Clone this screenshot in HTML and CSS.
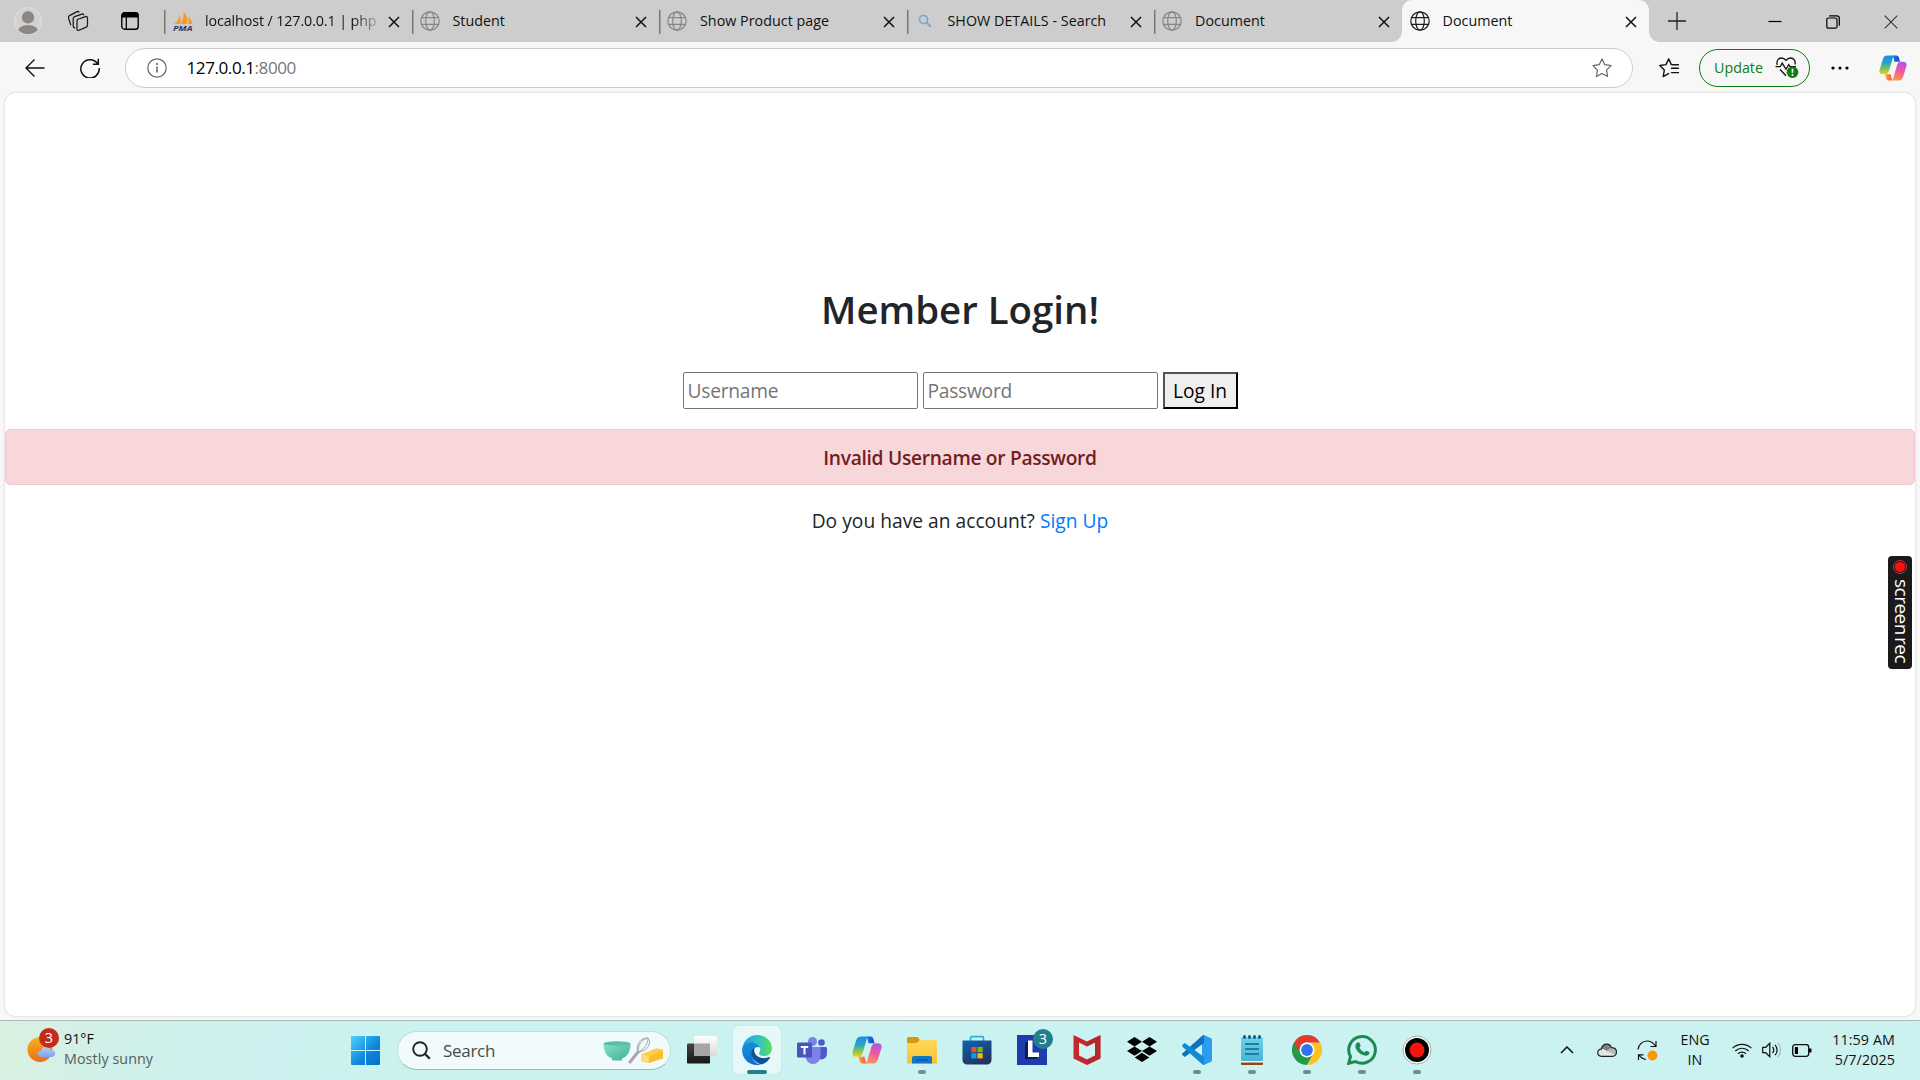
FILE: index.html
```html
<!DOCTYPE html>
<html lang="en">
<head>
<meta charset="utf-8">
<title>Document</title>
<link rel="stylesheet" href="styles.css">
</head>
<body>
<svg class="defs" aria-hidden="true">
  <defs>
    <linearGradient id="cpA" x1="0" y1="0" x2="0" y2="1"><stop offset="0" stop-color="#1b8df0"/><stop offset=".4" stop-color="#26a5c4"/><stop offset=".7" stop-color="#7fc25a"/><stop offset="1" stop-color="#f5cf1b"/></linearGradient>
    <linearGradient id="cpB" x1="0.6" y1="0" x2="0.3" y2="1"><stop offset="0" stop-color="#b257e8"/><stop offset=".45" stop-color="#ec5a9e"/><stop offset="1" stop-color="#ff9a4d"/></linearGradient>
    <linearGradient id="cpC"><stop offset="0" stop-color="#1b78e0"/><stop offset="1" stop-color="#1f45c8"/></linearGradient>
    <linearGradient id="cpD"><stop offset="0" stop-color="#f7b02c"/><stop offset="1" stop-color="#f2584b"/></linearGradient>
    <linearGradient id="win" x1="0" y1="0" x2="1" y2="1"><stop offset="0" stop-color="#4fd0fb"/><stop offset=".6" stop-color="#0f84dc"/><stop offset="1" stop-color="#0070cc"/></linearGradient>
    <linearGradient id="sun" x1="0" y1="0" x2="0" y2="1"><stop offset="0" stop-color="#f3b51f"/><stop offset="1" stop-color="#ee6a17"/></linearGradient>
    <linearGradient id="cloud" x1="0" y1="0" x2="0" y2="1"><stop offset="0" stop-color="#b3cdfb"/><stop offset="1" stop-color="#7fa3ec"/></linearGradient>
    <linearGradient id="bowl" x1="0" y1="0" x2="1" y2="1"><stop offset="0" stop-color="#86e3cb"/><stop offset="1" stop-color="#3fae98"/></linearGradient>
    <linearGradient id="edgeTop"><stop offset="0" stop-color="#1ba0dd"/><stop offset=".5" stop-color="#2cc1c9"/><stop offset="1" stop-color="#62df5a"/></linearGradient>
    <linearGradient id="edgeSide" x1="0" y1="0" x2="0.4" y2="1"><stop offset="0" stop-color="#1a93dc"/><stop offset="1" stop-color="#0f6fce"/></linearGradient>
    <linearGradient id="folder" x1="0" y1="0" x2="0" y2="1"><stop offset="0" stop-color="#ffd95e"/><stop offset="1" stop-color="#fcbf2c"/></linearGradient>
    <linearGradient id="store" x1="0" y1="0" x2="0.5" y2="1"><stop offset="0" stop-color="#0d63b4"/><stop offset="1" stop-color="#24345f"/></linearGradient>
    <linearGradient id="note" x1="0" y1="0" x2="0" y2="1"><stop offset="0" stop-color="#6fd2ea"/><stop offset="1" stop-color="#46b3d4"/></linearGradient>
    <linearGradient id="dark" x1="0" y1="0" x2="0" y2="1"><stop offset="0" stop-color="#444"/><stop offset="1" stop-color="#161616"/></linearGradient>
    <linearGradient id="light" x1="0" y1="0" x2="0" y2="1"><stop offset="0" stop-color="#fff"/><stop offset="1" stop-color="#dadada"/></linearGradient>
  </defs>
  <symbol id="globe" viewBox="0 0 20 20"><g fill="none" stroke="currentColor" stroke-width="1.2"><circle cx="10" cy="10" r="9.2"/><ellipse cx="10" cy="10" rx="4.3" ry="9.2"/><path d="M1.6 6.6h16.8M1.6 13.4h16.8"/></g></symbol>
  <symbol id="close" viewBox="0 0 12 12"><path d="M1 1l10 10M11 1L1 11" stroke="currentColor" stroke-width="1.5" fill="none"/></symbol>
  <symbol id="lens" viewBox="0 0 14 14"><circle cx="5.5" cy="5.5" r="4" fill="none" stroke="#7ba7d0" stroke-width="1.7"/><path d="M8.5 8.5l4.3 4.3" stroke="#7ba7d0" stroke-width="2"/></symbol>
  <symbol id="copilot" viewBox="0 0 30 28">
    <path d="M15 .5h3.500c1.500 0 2.400.9 2.800 2.200l1.300 4.500h-6.100z" fill="url(#cpC)"/>
    <path d="M14 27.500h-3.500c-1.500 0-2.400-.9-2.800-2.200l-1.300-4.500h6.100z" fill="url(#cpD)"/>
    <path d="M9 .5h8.500c-1.600.3-2.300 1.500-2.800 3l-4.200 14c-.6 2-1.700 3.300-3.800 3.300H4c-3 0-4.300-2-3.400-5L4.300 4C5 1.700 6.500.5 9 .5z" fill="url(#cpA)"/>
    <path d="M21 27.500h-8.500c1.600-.3 2.300-1.500 2.800-3l4.200-14c.6-2 1.700-3.300 3.800-3.300H26c3 0 4.300 2 3.400 5L25.700 24c-.7 2.300-2.200 3.500-4.700 3.500z" fill="url(#cpB)"/>
  </symbol>
</svg>

<header class="tabstrip">
  <div class="strip-tools">
    <svg class="avatar" viewBox="0 0 28 28"><defs><clipPath id="av"><circle cx="14" cy="14" r="13.200"/></clipPath></defs><circle cx="14" cy="14" r="13.500" fill="#d3d1cf" stroke="#e2e0dd"/><g clip-path="url(#av)" fill="#8b8785"><circle cx="14" cy="10.300" r="6.200"/><ellipse cx="14" cy="25" rx="10.500" ry="7"/></g></svg>
    <svg class="workspaces" viewBox="0 0 22 22" fill="none" stroke="#161616" stroke-width="1.200" stroke-linejoin="round" stroke-linecap="round"><path d="M11 9.200l7.500-2.600c1.200-.4 2 .1 2 1.300v7.300c0 1-.4 1.600-1.300 1.900L12 20.200c-1.200.4-2-.1-2-1.300v-7.800c0-1 .1-1.600 1-1.900z"/><path d="M7.800 17.800c-1-.2-1.600-.8-1.600-1.900V8.600c0-1.100.4-1.700 1.400-2l7.200-2.500c.9-.3 1.600 0 1.900.8"/><path d="M4.200 15.200L2 8.400c-.3-1.100 0-1.900 1-2.300l7.500-4c.8-.4 1.500-.2 2 .4" transform="translate(-.5 -.5)"/></svg>
    <svg class="tabactions" viewBox="0 0 18 18"><rect x=".8" y=".8" width="16.400" height="16.400" rx="2.800" fill="none" stroke="#000" stroke-width="1.400"/><path d="M.5 5.500V3A2.500 2.500 0 0 1 3 .5h12A2.500 2.500 0 0 1 17.500 3v2.500z"/><path d="M5.300 5v12" stroke="#000" stroke-width="1.300"/></svg>
  </div>
  <nav class="tabs">
    <div class="tab tab-first">
      <svg class="favicon pma" viewBox="0 0 20 20"><path d="M1 13C4 12 6 8 6.500 4c1.500 3 1.500 6 .5 9zM7.500 13C10.500 9 11 4 10.500.5 14 4 15 9 14 13zM15 13c1-3 .8-5-.5-7.500C17.500 7 19 10 19.500 13z" fill="#f8981d"/><text x="0" y="19.500" textLength="19.500" lengthAdjust="spacingAndGlyphs" class="pma-text">PMA</text></svg>
      <span class="tab-title fade">localhost / 127.0.0.1 | php</span><svg class="x"><use href="#close"/></svg>
    </div>
    <div class="tab"><svg class="favicon"><use href="#globe"/></svg><span class="tab-title">Student</span><svg class="x"><use href="#close"/></svg></div>
    <div class="tab"><svg class="favicon"><use href="#globe"/></svg><span class="tab-title">Show Product page</span><svg class="x"><use href="#close"/></svg></div>
    <div class="tab"><svg class="favicon lens"><use href="#lens"/></svg><span class="tab-title">SHOW DETAILS - Search</span><svg class="x"><use href="#close"/></svg></div>
    <div class="tab"><svg class="favicon"><use href="#globe"/></svg><span class="tab-title">Document</span><svg class="x"><use href="#close"/></svg></div>
    <div class="tab active"><svg class="favicon"><use href="#globe"/></svg><span class="tab-title">Document</span><svg class="x"><use href="#close"/></svg></div>
  </nav>
  <svg class="newtab" viewBox="0 0 18 18"><path d="M9 0v18M0 9h18" stroke="#222" stroke-width="1.300"/></svg>
  <div class="window-buttons">
    <svg viewBox="0 0 14 14"><path d="M.5 6.500h13" stroke="#000" stroke-width="1.200"/></svg>
    <svg viewBox="0 0 14 14" fill="none" stroke="#000" stroke-width="1.200"><rect x=".8" y="3" width="10.200" height="10.200" rx="1.500"/><path d="M3.200 .9H11a2.300 2.300 0 0 1 2.300 2.300v7.600"/></svg>
    <svg viewBox="0 0 14 14"><path d="M.7.7l12.600 12.600M13.300.7L.7 13.300" stroke="#333" stroke-width="1.100"/></svg>
  </div>
</header>

<div class="toolbar">
  <svg class="back" viewBox="0 0 20 20"><path d="M19.500 10H1M9.500 1.500L1 10l8.500 8.500" fill="none" stroke="#111" stroke-width="1.400"/></svg>
  <svg class="reload" viewBox="0 0 20 20" fill="none" stroke="#111" stroke-width="1.500"><path d="M17.500 5.500A9.200 9.200 0 1 0 19.200 10M18.300.8v5.400h-5.400"/></svg>
  <div class="address">
    <svg class="info" viewBox="0 0 20 20"><circle cx="10" cy="10" r="9.200" fill="none" stroke="#666" stroke-width="1.200"/><path d="M10 8.500v6" stroke="#555" stroke-width="1.400"/><circle cx="10" cy="6" r="1" fill="#555"/></svg>
    <span class="url">127.0.0.1<span class="port">:8000</span></span>
    <svg class="star" viewBox="0 0 20 20"><path d="M10 .9l2.800 5.800 6.300.9-4.600 4.500 1.100 6.400L10 15.500l-5.600 3 1.100-6.400L.9 7.600l6.300-.9z" fill="none" stroke="#666" stroke-width="1.200" stroke-linejoin="round"/></svg>
  </div>
  <svg class="favorites" viewBox="0 0 20 20" fill="none" stroke="#111" stroke-width="1.400" stroke-linejoin="round" stroke-linecap="round"><path d="M14.500 6.800L12.300 6.600 9.700.9 7 6.600l-6.200.9 4.500 4.600-1.100 6.500 5.400-3M12.500 10.300h7M12.500 14.600h7M15.500 6.800h4"/></svg>
  <div class="update"><span>Update</span>
    <svg viewBox="0 0 24 21"><g fill="none" stroke="#111" stroke-width="1.300"><path d="M2.300 8C1 4 3.400 1 6.500 1c2.200 0 3.400 1 4.500 2.400C12.100 2 13.300 1 15.500 1c3.200 0 5.500 3 4.400 6.500M5 12.500l6 6.200"/><path d="M.5 9.700h4.700l2-3.600 3.800 6.200 2.700-4.600 1.500 2H21"/></g><circle cx="17.500" cy="15.200" r="5.800" fill="#107c10"/><path d="M17.500 11.800v4" stroke="#fff" stroke-width="1.700"/><circle cx="17.500" cy="18" r="1" fill="#fff"/></svg>
  </div>
  <svg class="dots" viewBox="0 0 18 4"><circle cx="2" cy="2" r="1.600"/><circle cx="9" cy="2" r="1.600"/><circle cx="16" cy="2" r="1.600"/></svg>
  <svg class="copilot-top"><use href="#copilot"/></svg>
</div>

<main class="page">
  <h1>Member Login!</h1>
  <form class="login">
    <input type="text" placeholder="Username">
    <input type="password" placeholder="Password">
    <button type="button">Log In</button>
  </form>
  <div class="alert">Invalid Username or Password</div>
  <p class="signup">Do you have an account? <a href="#">Sign Up</a></p>
  <aside class="recorder"><i></i><span>screen<b>rec</b></span></aside>
</main>

<footer class="taskbar">
  <div class="weather">
    <svg viewBox="0 0 34 36"><circle cx="13" cy="22.500" r="12.500" fill="url(#sun)"/><path d="M15 30c-6 0-6-6-1-6 1-5 8-6 10-1 5-1 6 7 0 7z" fill="url(#cloud)"/><circle cx="22" cy="11" r="10" fill="#c42b1c"/><text x="22" y="16.200" class="badge-text">3</text></svg>
    <p>91°F<br><span>Mostly sunny</span></p>
  </div>
  <svg class="start" viewBox="0 0 29 29"><path d="M1 0h13v14H0V1a1 1 0 0 1 1-1zM15 0h13a1 1 0 0 1 1 1v13H15zM0 15h14v14H1a1 1 0 0 1-1-1zM15 15h14v13a1 1 0 0 1-1 1H15z" fill="url(#win)"/></svg>
  <div class="search">
    <svg class="search-icon" viewBox="0 0 19 19"><circle cx="8" cy="8" r="6.800" fill="none" stroke="#222" stroke-width="1.900"/><path d="M12.800 12.800l5 5" stroke="#222" stroke-width="2.300"/></svg>
    <span>Search</span>
    <svg class="cooking" viewBox="0 0 62 28"><path d="M.5 7.500c0 8 3 13 8.500 15v2h10v-2c5.500-2 8.500-7 8.500-15z" fill="url(#bowl)"/><ellipse cx="14" cy="7.500" rx="13.500" ry="2.200" fill="#59bfa8"/><path d="M27 26l8-10" stroke="#aaa0c0" stroke-width="3" stroke-linecap="round"/><g fill="none" stroke="#a5a5ad" stroke-width="1"><path d="M35 16c-3-7 3-15 10-14 4 4 0 14-10 14zM35 16C35 9 38 4 45 2c0 6-4 12-10 14z"/></g><path d="M38.500 18.500l15-6 6.500 1.500v8.500l-14 4.500-7.500-1.500z" fill="#fbbf2e"/><path d="M38.500 18.500l7.500 1.500v7l-7.500-1.500z" fill="#ffdc72"/><path d="M38.500 18.500l15-6 6.500 1.500-14 6z" fill="#ffce4a"/></svg>
  </div>
  <div class="apps">
    <div class="app"><svg viewBox="0 0 30 30"><rect x="0" y="8.500" width="23" height="20" rx="1" fill="url(#dark)"/><rect x="7" y="1" width="23" height="20" rx="1" fill="url(#light)"/><rect x="7" y="8.500" width="16" height="12.500" fill="#a5a5a5"/></svg></div>
    <div class="app current"><svg viewBox="0 0 30 30"><path d="M.7 13C1.500 5.500 7.500 0 15 0c8.500 0 15 6 15 13.500 0 4.500-3.500 7.500-7.500 7.500-3.500 0-5.500-1.200-5.500-2.500 0-1 1.300-1.500 1.300-4C18.300 11 15 7 10 7 5 7 1.800 9.700.7 13z" fill="url(#edgeTop)"/><path d="M.1 15C.1 10.500 4 7 9.500 7c4 0 7.500 2.500 8.500 5.500-4-2-8 1.500-8 6.500 0 6 4.500 10.500 9 10.500-1.300.4-2.600.5-4 .5C6.500 30 .1 23.500.1 15z" fill="url(#edgeSide)"/><path d="M12.700 12.700C9.500 14 8.600 18 10 21.500c1.600 4.500 6 7 9.500 8 4-1.200 6.800-3.700 8.600-6.700.3-.6-.2-1-.8-.7-5.800 2.500-13 .5-14.700-4.600-.6-1.800-.4-3.500.1-4.800z" fill="#0c4f9c"/></svg></div>
    <div class="app"><svg viewBox="0 0 30 30"><circle cx="15.500" cy="6.500" r="4.500" fill="#7b83eb"/><circle cx="24.500" cy="7.500" r="3.300" fill="#5059c9"/><path d="M20 12h8.500c.8 0 1.500.7 1.500 1.500V19a6 6 0 0 1-10 4z" fill="#5059c9"/><path d="M10 12h12.500c.6 0 1 .4 1 1v8.500a7.500 7.500 0 0 1-15 0V13c0-.6.400-1 1.500-1z" fill="#7b83eb"/><rect x="0" y="7.500" width="15" height="15" rx="1.300" fill="#4b53bc"/><path d="M3.800 11h7.400v2H8.500v6.500h-2V13H3.800z" fill="#fff"/></svg></div>
    <div class="app"><svg viewBox="0 0 30 30"><use href="#copilot" y="1" width="30" height="28"/></svg></div>
    <div class="app open"><svg viewBox="0 0 30 30"><path d="M0 3.500C0 2.500.6 2 1.500 2h8c1 0 1.500.3 2 1l1.500 2.500V10H0z" fill="#d9970f"/><path d="M0 8h9.500l3.500-3h15.500c1 0 1.500.6 1.500 1.500v21c0 .6-.4 1-1 1H1c-.6 0-1-.4-1-1z" fill="url(#folder)"/><path d="M5 28.500V23c0-1.300.8-2 2-2h16c1.200 0 2 .7 2 2v5.500z" fill="#1476c8"/><path d="M9.500 25h11" stroke="#0b4f92" stroke-width="1.300"/></svg></div>
    <div class="app"><svg viewBox="0 0 30 30"><path d="M8.500 6V3c0-.8.500-1.300 1.300-1.300h10.400c.8 0 1.300.5 1.300 1.300v3" fill="none" stroke="#1fb4ea" stroke-width="1.700"/><path d="M.5 5.500h29V25a4.500 4.500 0 0 1-4.500 4.500H5A4.500 4.500 0 0 1 .5 25z" fill="url(#store)"/><path d="M9.300 12h5.200v5.200H9.300z" fill="#f25022"/><path d="M15.500 12h5.200v5.200h-5.200z" fill="#7fba00"/><path d="M9.300 18.200h5.200v5.200H9.300z" fill="#00a4ef"/><path d="M15.500 18.200h5.200v5.200h-5.200z" fill="#ffb900"/></svg></div>
    <div class="app lenovo"><svg viewBox="0 0 30 30"><path d="M0 0h30v30H0z" fill="#1e3cad"/><path d="M8 23l3-3h11l-2.500 4H8z" fill="#081f52"/><path d="M8 8l3-2v15l-3 3z" fill="#081f52"/><path d="M11 5.500h4.500v12H22V22H11z" fill="#fff"/></svg><span class="count">3</span></div>
    <div class="app"><svg viewBox="0 0 30 30"><path d="M1.500 0L15 6.500 28.500 0v23.500L15 30 1.500 23.500z" fill="#c4282d"/><path d="M7 7.500l8 4 8-4v13L15 24.500l-8-4z" fill="#cdf2f1"/><path d="M15 6.500L28.500 0v23.500L15 30v-5.500l8-4v-13l-8 4z" fill="#a82226" opacity=".4"/></svg></div>
    <div class="app"><svg viewBox="0 0 30 30"><path d="M7.500 2L15 6.700l-7.500 4.700L0 6.700zM22.500 2L30 6.700l-7.500 4.700L15 6.700zM7.500 11.400l7.500 4.700-7.500 4.700L0 16.100zM22.500 11.400l7.500 4.700-7.500 4.700L15 16.100zM15 17.700l7.300 4.700L15 27l-7.300-4.600z"/></svg></div>
    <div class="app open"><svg viewBox="0 0 30 30"><path d="M22 0l7 3.200c.7.300 1 .8 1 1.500v20.600c0 .7-.3 1.200-1 1.500L22 30l-2-4V4z" fill="#2a9df0"/><path d="M22 0v8L3.500 21.500c-.5.4-1 .4-1.500 0L.5 20c-.6-.5-.6-1.200 0-1.800L20.500.5c.5-.4 1-.6 1.500-.5z" fill="#0f73bd"/><path d="M22 30v-8L3.500 8.500c-.5-.4-1-.4-1.500 0L.5 10c-.6.500-.6 1.200 0 1.800l20 17.700c.5.400 1 .6 1.500.5z" fill="#1588d2"/></svg></div>
    <div class="app open"><svg viewBox="0 0 30 30"><rect x="4" y="25" width="22" height="5" rx="1" fill="#8c4a14"/><rect x="4" y="25" width="22" height="2.500" fill="#fff"/><rect x="4" y="2" width="22" height="24" rx="1.500" fill="url(#note)"/><path d="M8 9h14M8 14h14M8 19h14" stroke="#11658c" stroke-width="1.600"/><g fill="#0f567a"><ellipse cx="7.500" cy="2" rx="1.500" ry="2"/><ellipse cx="12.500" cy="2" rx="1.500" ry="2"/><ellipse cx="17.500" cy="2" rx="1.500" ry="2"/><ellipse cx="22.500" cy="2" rx="1.500" ry="2"/></g></svg></div>
    <div class="app open"><svg viewBox="0 0 30 30"><path d="M2 7.500A15 15 0 0 0 15 30l6.300-11.200L15 15z" fill="#239a48"/><path d="M15 7.500h13A15 15 0 0 1 15 30l6.500-11.200z" fill="#fcc31e"/><path d="M2 7.500A15 15 0 0 1 28 7.500H15a7.500 7.500 0 0 0-6.500 11.200z" fill="#e33b2e"/><circle cx="15" cy="15" r="7.500" fill="#fff"/><circle cx="15" cy="15" r="5.900" fill="#2f74ea"/></svg></div>
    <div class="app open"><svg viewBox="0 0 30 30"><path d="M1.700 28.300l1.800-6.800A13.300 13.300 0 1 1 8.500 26.500z" fill="none" stroke="#1d8a55" stroke-width="3"/><path d="M10.500 7.500c1-.6 1.800-.3 2.100.5l1 2.500c.3.700-1.300 2-1 2.500 1 1.900 2.500 3.300 4.700 4.200.6.300 1.500-1.700 2.200-1.400l2.600 1.200c.6.300.5 1.200 0 2.100-1.200 2-3.500 2-6 1-4-1.500-7.500-5.500-7.700-8.700-.1-1.700.8-3.100 2.100-3.900z" fill="#1d8a55"/></svg></div>
    <div class="app open"><svg viewBox="0 0 30 30"><circle cx="15" cy="15" r="14" fill="#fff" stroke="#888" stroke-width=".7"/><circle cx="15" cy="15" r="12" fill="#000"/><circle cx="15" cy="15" r="7.500" fill="#f5140c"/></svg></div>
  </div>
  <div class="tray">
    <svg class="chevron" viewBox="0 0 14 8"><path d="M1 7l6-6 6 6" fill="none" stroke="#111" stroke-width="1.500"/></svg>
    <svg class="onedrive" viewBox="0 0 20 14"><path d="M4.300 6.200C5.500.2 12.500-.7 14.500 4.700L10 8 6.700 6.200z" fill="#808080"/><path d="M4.300 6.200c1-.2 2 0 2.800.4L16 12.500l-.7.800H4.500C-.5 13-.4 6.500 4.300 6.200z" fill="#e4e4e4"/><path d="M10 8l4.500-3.300c4.500 0 6 4.500 4 7.300z" fill="#b9b9b9"/><path d="M4.500 13.300C-.5 13-.4 6.500 4.300 6.200 5.500.2 12.500-.7 14.500 4.700c6.500.1 6.600 8.300.8 8.600z" fill="none" stroke="#222" stroke-width="1.200"/></svg>
    <svg class="sync" viewBox="0 0 21 21"><path d="M1 9.500C1.500 4.500 5.500 1 10 1c3.500 0 6.500 2 8.500 5M19 1v5.500h-5.500M9 19.500c-3-.3-5-1.700-7-4.300M1.500 20v-5.200h5" fill="none" stroke="#111" stroke-width="1.200"/><circle cx="15.500" cy="15.500" r="5" fill="#ff9800"/></svg>
    <p class="lang">ENG<br>IN</p>
    <svg class="wifi" viewBox="0 0 20 15" fill="none" stroke="#111" stroke-width="1.200"><path d="M.6 5.200a13.300 13.300 0 0 1 18.800 0M3.300 8a9.500 9.500 0 0 1 13.400 0M6 10.700a5.700 5.700 0 0 1 8 0"/><circle cx="10" cy="13" r="1.200" fill="#111"/></svg>
    <svg class="sound" viewBox="0 0 20 16" fill="none" stroke="#111" stroke-width="1.200"><path d="M.7 5.300h3L7.800 1.300v13.400L3.700 10.700h-3zM10.500 5a4.500 4.500 0 0 1 0 6M13 2.800a7.500 7.500 0 0 1 0 10.400"/><path d="M15.700.8a10.500 10.500 0 0 1 0 14.400" stroke="#9cbcbb"/></svg>
    <svg class="battery" viewBox="0 0 20 13"><rect x=".7" y=".7" width="16" height="11.600" rx="2.500" fill="none" stroke="#111" stroke-width="1.300"/><rect x="2.800" y="3" width="3.200" height="7" rx=".5"/><path d="M17 4.500h1.500c.7 0 1 .3 1 1v2c0 .7-.3 1-1 1H17z"/></svg>
    <p class="clock">11:59 AM<br>5/7/2025</p>
  </div>
</footer>
</body>
</html>
```
FILE: styles.css
```css
* { box-sizing: border-box; }

body {
  margin: 0;
  width: 1920px;
  height: 1080px;
  display: flex;
  flex-direction: column;
  overflow: hidden;
  background: #f7f7f7;
  color: #111;
  font-family: "Open Sans", "Noto Sans", sans-serif;
  font-size: 14.3px;
}

svg { display: block; flex: none; }
p { margin: 0; }
.defs { position: absolute; width: 0; height: 0; }

/* Tab strip */
.tabstrip { display: flex; height: 42px; background: #cdcdcd; flex: none; }
.strip-tools { display: flex; align-items: center; width: 164px; padding-left: 14px; flex: none; }
.avatar { width: 28px; height: 28px; }
.workspaces { width: 22px; height: 22px; margin-left: 25px; }
.tabactions { width: 18px; height: 18px; margin-left: 32px; }
.tabs { display: flex; flex: none; }
.tab {
  display: flex;
  align-items: center;
  width: 247.5px;
  height: 42px;
  padding: 0 12px 0 8px;
  background: linear-gradient(#777, #777) 0 10px / 1.5px 24px no-repeat;
}
.favicon { width: 20px; height: 20px; margin-right: 13px; color: #868686; }
.tab-first .favicon { margin: 0 12px 0 1px; }
.favicon.lens { width: 14px; height: 14px; margin: 0 16px 0 3px; }
.pma-text { font: italic 700 7px "Open Sans", sans-serif; fill: #33356b; }
.tab-title { flex: 1; white-space: nowrap; line-height: 24px; margin-top: -1px; letter-spacing: .02px; }
.fade {
  letter-spacing: -.11px;
  color: transparent;
  background: linear-gradient(90deg, #111 148px, rgba(17, 17, 17, .25) 170px);
  -webkit-background-clip: text;
  background-clip: text;
}
.x { width: 12px; height: 12px; margin-top: 2px; }
.tab.active { position: relative; background: #f7f7f7; border-radius: 10px 10px 0 0; }
.tab.active .favicon { color: #1c1c1c; }
.tab.active::before, .tab.active::after {
  content: "";
  position: absolute;
  bottom: 0;
  width: 10px;
  height: 10px;
}
.tab.active::before { left: -10px; background: radial-gradient(circle at 0 0, transparent 9.500px, #f7f7f7 10px); }
.tab.active::after { right: -10px; background: radial-gradient(circle at 100% 0, transparent 9.500px, #f7f7f7 10px); }
.newtab { width: 18px; height: 18px; margin: 12px 0 0 19px; }
.window-buttons { display: flex; gap: 44px; margin: 15px 22px 0 auto; }
.window-buttons svg { width: 14px; height: 14px; }

/* Toolbar */
.toolbar { display: flex; align-items: center; height: 51px; flex: none; padding-left: 25px; }
.back, .reload { width: 20px; height: 20px; }
.reload { margin-left: 35px; }
.address {
  display: flex;
  align-items: center;
  width: 1508px;
  height: 40px;
  margin-left: 25px;
  padding: 0 20px 0 21px;
  border: 1px solid #ccc;
  border-radius: 20px;
  background: #fff;
}
.info { width: 20px; height: 20px; }
.url { margin-left: 19.500px; font-size: 17.100px; letter-spacing: -.45px; line-height: 24px; color: #000; }
.port { color: #777; }
.star { width: 20px; height: 20px; margin-left: auto; }
.favorites { width: 20px; height: 20px; margin-left: 26px; }
.update {
  display: flex;
  align-items: center;
  justify-content: space-between;
  width: 111px;
  height: 38px;
  margin-left: 20px;
  padding: 0 10px 0 14px;
  border: 1.500px solid #107c10;
  border-radius: 19px;
  color: #107c10;
}
.update svg { width: 24px; height: 21px; }
.dots { width: 18px; height: 4px; margin-left: 21px; }
.copilot-top { width: 28px; height: 26px; margin-left: 30px; }

/* Login page */
.page {
  position: relative;
  height: 923px;
  margin: 0 5px 4px;
  padding-top: 192px;
  flex: none;
  background: #fff;
  border-radius: 10px;
  box-shadow: 0 0 2px #bbb;
  text-align: center;
  color: #212529;
  font-size: 19.2px;
}
h1 { margin: 0; font-size: 38.400px; font-weight: 600; line-height: 48px; }
.login { display: flex; justify-content: center; gap: 5px; margin-top: 39px; }
.login input {
  width: 235px;
  height: 37px;
  padding: 0 4px;
  border: 1px solid #767676;
  border-radius: 2px;
  font: inherit;
  letter-spacing: -.25px;
}
.login input::placeholder { color: #757575; }
.login button {
  width: 75px;
  height: 37px;
  padding: 0;
  border: 2px outset #000;
  background: #efefef;
  color: #000;
  font: inherit;
}
.alert {
  margin-top: 20px;
  height: 56px;
  border: 1px solid #f5c6cb;
  border-radius: 5px;
  background: #f8d7da;
  color: #721c24;
  font-weight: 600;
  line-height: 56px;
  letter-spacing: -.3px;
}
.signup { margin-top: 20px; line-height: 32px; letter-spacing: .02px; }
.signup a { color: #007bff; text-decoration: none; }
.recorder {
  position: absolute;
  right: 3px;
  top: 463px;
  display: flex;
  flex-direction: column;
  align-items: center;
  width: 24px;
  height: 113px;
  padding-top: 5px;
  border-radius: 4px;
  background: #1a1a1c;
  color: #fff;
}
.recorder i { width: 12px; height: 12px; border: 1px solid #1a1a1c; border-radius: 50%; background: #f11; outline: 1px solid #c33; }
.recorder span { writing-mode: vertical-rl; margin: 6px 0 0 4px; font-size: 19px; line-height: 24px; letter-spacing: -.5px; }
.recorder b { font-weight: 400; margin-top: 2px; }

/* Taskbar */
.taskbar {
  display: flex;
  align-items: center;
  height: 60px;
  flex: none;
  border-top: 1px solid #a9bcba;
  background: linear-gradient(100deg, #dbf0e1 0, #d0f0ea 130px, #cdf0ef 260px, #caf3f0 380px, #cbf2f1 100%);
}
.weather { display: flex; align-items: center; width: 351px; padding-left: 27px; flex: none; }
.weather svg { width: 34px; height: 36px; margin-top: -11px; }
.badge-text { font: 14.500px "Open Sans", sans-serif; fill: #fff; text-anchor: middle; }
.weather p { margin: -3px 0 0 3px; line-height: 20px; }
.weather span { color: #52605e; letter-spacing: .08px; }
.start { width: 29px; height: 29px; margin-top: -1px; }
.search {
  display: flex;
  align-items: center;
  width: 274px;
  height: 39px;
  margin: -1px 0 0 17px;
  padding: 0 5px 0 14px;
  border: 1px solid #c2dddb;
  border-bottom-color: #9dbcba;
  border-radius: 20px;
  background: #f1fbfc;
  font-size: 17px;
  color: #454b4b;
  flex: none;
}
.search-icon { width: 19px; height: 19px; }
.search span { margin: 0 0 0 12px; letter-spacing: -.3px; }
.cooking { width: 62px; height: 28px; margin-left: auto; }
.apps { display: flex; gap: 7px; margin: -1px 0 0 7px; flex: none; }
.app {
  position: relative;
  display: flex;
  align-items: center;
  justify-content: center;
  width: 48px;
  height: 48px;
  border-radius: 5px;
}
.app svg { width: 30px; height: 30px; }
.current { background: #e6f8f8; box-shadow: 0 0 1px #9bb; }
.current::after, .open::after {
  content: "";
  position: absolute;
  bottom: 0;
  left: 20px;
  width: 8px;
  height: 4px;
  border-radius: 2px;
  background: #748c8b;
}
.current::after { left: 14px; width: 20px; background: #22808d; }
.count {
  position: absolute;
  left: 25px;
  top: 3px;
  width: 20px;
  height: 20px;
  border-radius: 50%;
  background: #22808d;
  color: #fff;
  font-size: 14.500px;
  line-height: 20px;
  text-align: center;
}
.tray { display: flex; align-items: center; margin: -1px 0 0 auto; padding-right: 25px; }
.tray p { line-height: 20px; margin-top: -1px; }
.chevron { width: 14px; height: 8px; }
.onedrive { width: 20px; height: 14px; margin-left: 23px; }
.sync { width: 21px; height: 21px; margin-left: 20px; }
.lang { width: 30px; margin-left: 22px; text-align: center; }
.wifi { width: 20px; height: 15px; margin-left: 22px; }
.sound { width: 20px; height: 16px; margin-left: 10px; }
.battery { width: 20px; height: 13px; margin-left: 10px; }
.clock { width: 68px; margin-left: 15px; text-align: right; white-space: nowrap; letter-spacing: .1px; }
```
